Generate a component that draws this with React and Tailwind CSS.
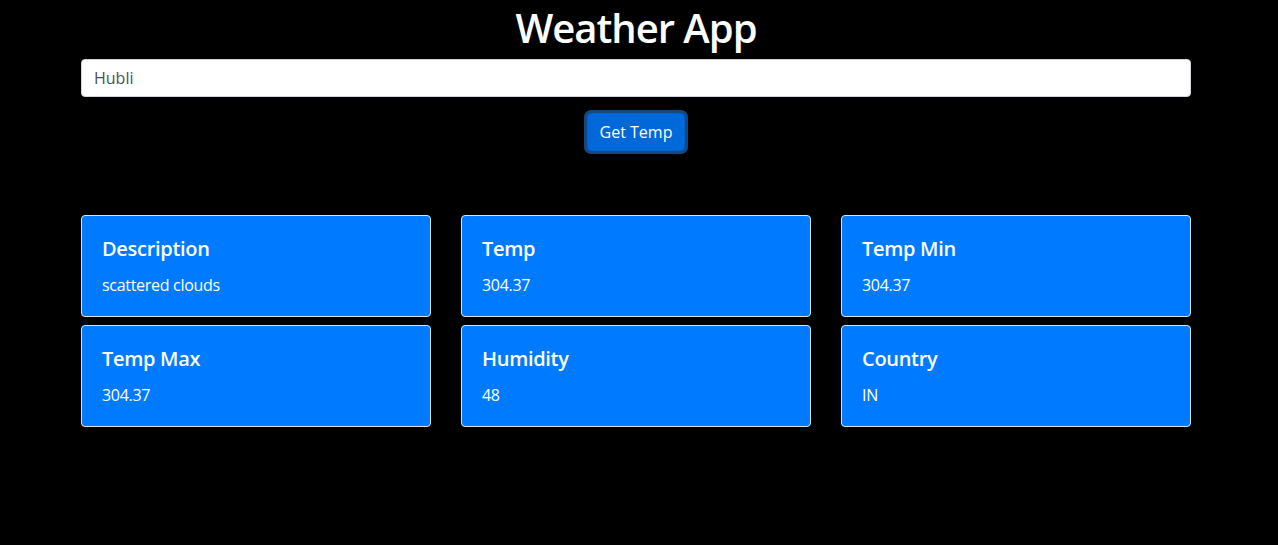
import React from "react";

const cards = [
  ["Description", "scattered clouds"],
  ["Temp", "304.37"],
  ["Temp Min", "304.37"],
  ["Temp Max", "304.37"],
  ["Humidity", "48"],
  ["Country", "IN"],
];

export default function App() {
  return (
    <div
      className="min-h-[545px] bg-black text-white"
      style={{ fontFamily: '"Open Sans", "Noto Sans", sans-serif' }}
    >
      <div className="w-[1110px] ml-[81px]">
        <h1 className="text-center text-[40px] leading-[48px] font-semibold tracking-[-1px] pt-[4px] mb-[7px]">
          Weather App
        </h1>
        <input
          defaultValue="Hubli"
          className="block w-full h-[38px] px-3 text-base text-[#495057] bg-white border border-[#ced4da] rounded"
        />
        <div className="flex justify-center mt-[16px]">
          <button className="h-[38px] px-3 text-base bg-[#0069d9] border border-[#0062cc] rounded text-white shadow-[0_0_0_3px_rgba(38,143,255,0.5)]">
            Get Temp
          </button>
        </div>
        <div className="grid grid-cols-3 gap-x-[30px] gap-y-2 mt-[64px]">
          {cards.map(([t, v]) => (
            <div
              key={t}
              className="bg-[#007bff] border border-[#dee2e6] rounded pt-[21px] px-5 pb-5 h-[102px]"
            >
              <h5 className="text-[20px] leading-6 font-semibold tracking-[-0.3px] mb-3">
                {t}
              </h5>
              <p className="text-base leading-6 tracking-[-0.3px]">{v}</p>
            </div>
          ))}
        </div>
      </div>
    </div>
  );
}
